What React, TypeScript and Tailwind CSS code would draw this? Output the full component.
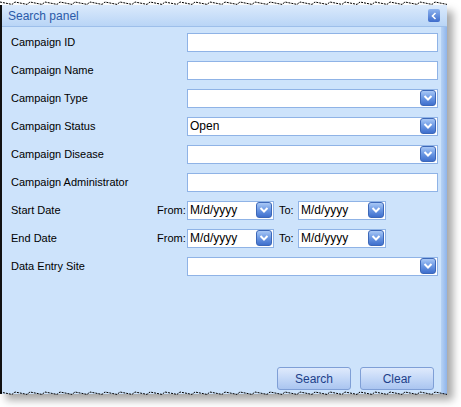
import React from 'react';

const font = { fontFamily: '"Liberation Sans", Arial, sans-serif' };

const DropBtn = () => (
  <span className="flex h-[16px] w-[16px] shrink-0 items-center justify-center rounded-[3px] border border-[#3d68b8] bg-gradient-to-b from-[#a9c8f5] via-[#6a97e3] to-[#3f6fcd]">
    <svg width="10" height="8" viewBox="0 0 10 8">
      <path d="M1.5 2 L5 5.5 L8.5 2" fill="none" stroke="#fff" strokeWidth="2" />
    </svg>
  </span>
);

const TextBox = ({ value = '', combo = false, className = '' }: { value?: string; combo?: boolean; className?: string }) => (
  <div className={`flex h-[19px] items-center border border-[#8fb3e6] bg-white pl-[2px] pr-[1px] ${className}`}>
    <span className="flex-1 text-[12px] text-black">{value}</span>
    {combo && <DropBtn />}
  </div>
);

const Row = ({ label, children }: { label: string; children: React.ReactNode }) => (
  <div className="flex h-[28px] items-center">
    <span className="w-[185px] pl-[9px] text-[11px] text-black">{label}</span>
    {children}
  </div>
);

const DateRange = () => (
  <div className="flex items-center text-[11px] text-black">
    <span className="w-[30px]">From:</span>
    <TextBox value="M/d/yyyy" combo className="w-[87px]" />
    <span className="w-[24px] pl-[5px]">To:</span>
    <TextBox value="M/d/yyyy" combo className="w-[88px]" />
  </div>
);

const Jagged = ({ y, w }: { y: number; w: number }) => {
  const pts: string[] = [];
  for (let x = 0; x <= w; x += 3) {
    pts.push(`${x},${y + ((x * 7) % 5) * 0.6}`);
  }
  return <polyline points={pts.join(' ')} fill="none" stroke="#000" strokeWidth="1" strokeDasharray="2 1" />;
};

export default function App() {
  return (
    <div className="relative h-[407px] w-[461px] overflow-hidden bg-white" style={font}>
      <div className="pt-[5px]">
        <div className="flex h-[389px] w-[447px] flex-col border-l-2 border-[#111] bg-[#cde3fb] shadow-[6px_6px_8px_rgba(0,0,0,0.35)]">
          <div className="flex h-[22px] items-center justify-between border-b border-[#9dbfea] bg-gradient-to-b from-[#dbeafc] to-[#b9d5f6] pl-[6px] pr-[7px]">
            <span className="text-[12px] text-[#2a5aa8]">Search panel</span>
            <span className="flex h-[13px] w-[12px] items-center justify-center rounded-[2px] bg-gradient-to-b from-[#8fb4ee] to-[#3f6ccb]">
              <svg width="6" height="8" viewBox="0 0 6 8">
                <path d="M4.5 1 L1.5 4 L4.5 7" fill="none" stroke="#fff" strokeWidth="1.6" />
              </svg>
            </span>
          </div>
          <div className="flex flex-1">
            <div className="flex flex-1 flex-col pt-[1px]">
              <Row label="Campaign ID"><TextBox className="w-[251px]" /></Row>
              <Row label="Campaign Name"><TextBox className="w-[251px]" /></Row>
              <Row label="Campaign Type"><TextBox combo className="w-[251px]" /></Row>
              <Row label="Campaign Status"><TextBox value="Open" combo className="w-[251px]" /></Row>
              <Row label="Campaign Disease"><TextBox combo className="w-[251px]" /></Row>
              <Row label="Campaign Administrator"><TextBox className="w-[251px]" /></Row>
              <div className="flex h-[28px] items-center">
                <span className="w-[155px] pl-[9px] text-[11px] text-black">Start Date</span>
                <DateRange />
              </div>
              <div className="flex h-[28px] items-center">
                <span className="w-[155px] pl-[9px] text-[11px] text-black">End Date</span>
                <DateRange />
              </div>
              <Row label="Data Entry Site"><TextBox combo className="w-[251px]" /></Row>
              <div className="mt-auto mb-[4px] flex justify-end gap-[9px] pr-[7px]">
                <button className="h-[23px] w-[74px] rounded-[3px] border border-[#7f9fd6] bg-gradient-to-b from-[#dfeafc] via-[#c4d8f7] to-[#aac5f0] text-[12px] text-[#1d3f8a]">Search</button>
                <button className="h-[23px] w-[74px] rounded-[3px] border border-[#7f9fd6] bg-gradient-to-b from-[#dfeafc] via-[#c4d8f7] to-[#aac5f0] text-[12px] text-[#1d3f8a]">Clear</button>
              </div>
            </div>
            <div className="w-[6px] bg-gradient-to-r from-[#b7d3f5] to-[#8fb4ea]" />
          </div>
        </div>
      </div>
      <svg className="pointer-events-none absolute left-0 top-0" width="461" height="407">
        <Jagged y={2} w={447} />
        <Jagged y={392} w={447} />
      </svg>
    </div>
  );
}
